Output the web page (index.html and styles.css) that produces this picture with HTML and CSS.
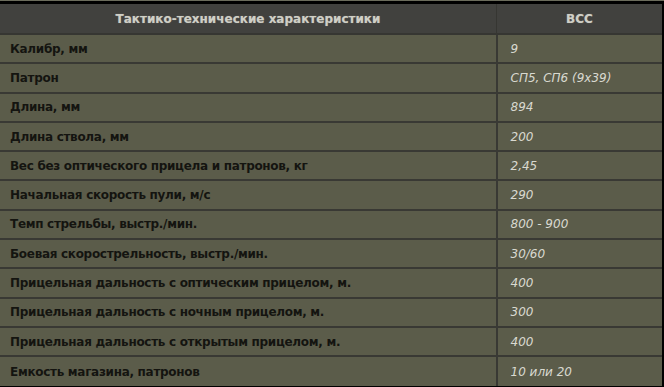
FILE: index.html
```html
<!DOCTYPE html>
<html lang="ru">
<head>
<meta charset="utf-8">
<link rel="stylesheet" href="styles.css">
</head>
<body>
<div class="frame">
<table class="specs">
<thead>
<tr><th class="c1">Тактико-технические характеристики</th><th class="c2">ВСС</th></tr>
</thead>
<tbody>
<tr><td class="c1">Калибр, мм</td><td class="c2">9</td></tr>
<tr><td class="c1">Патрон</td><td class="c2">СП5, СП6 (9x39)</td></tr>
<tr><td class="c1">Длина, мм</td><td class="c2">894</td></tr>
<tr><td class="c1">Длина ствола, мм</td><td class="c2">200</td></tr>
<tr><td class="c1">Вес без оптического прицела и патронов, кг</td><td class="c2">2,45</td></tr>
<tr><td class="c1">Начальная скорость пули, м/с</td><td class="c2">290</td></tr>
<tr><td class="c1">Темп стрельбы, выстр./мин.</td><td class="c2">800 - 900</td></tr>
<tr><td class="c1">Боевая скорострельность, выстр./мин.</td><td class="c2">30/60</td></tr>
<tr><td class="c1">Прицельная дальность с оптическим прицелом, м.</td><td class="c2">400</td></tr>
<tr><td class="c1">Прицельная дальность с ночным прицелом, м.</td><td class="c2">300</td></tr>
<tr><td class="c1">Прицельная дальность с открытым прицелом, м.</td><td class="c2">400</td></tr>
<tr><td class="c1">Емкость магазина, патронов</td><td class="c2">10 или 20</td></tr>
</tbody>
</table>
</div>
</body>
</html>
```

FILE: styles.css
```css
html, body {
  margin: 0;
  padding: 0;
  background: #000;
}
.frame {
  width: 664px;
  height: 387px;
  background: #000;
  border-top: 1px solid #6b6c5c;
  box-sizing: border-box;
  padding-top: 3px;
  overflow: hidden;
}
.specs {
  width: 662px;
  border-collapse: collapse;
  table-layout: fixed;
  font-family: "DejaVu Sans", Verdana, sans-serif;
  font-size: 12px;
  background: #5b5c4a;
}
.specs .c1 { width: 496px; }
.specs th {
  background: #41413e;
  color: #cfcfc6;
  font-weight: bold;
  height: 29px;
  padding: 0;
  text-align: center;
  border-bottom: 2px solid #363632;
  text-shadow: 0 0 1px #8a8a80;
}
.specs th.c1 { border-right: 1px solid #363632; }
.specs td {
  height: 27.3px;
  padding: 0 10px;
  border-bottom: 2px solid #393934;
  vertical-align: middle;
}
.specs td.c1 {
  color: #141410;
  font-weight: bold;
  letter-spacing: -0.3px;
  border-right: 2px solid #393934;
}
.specs td.c2 {
  color: #d9d9d0;
  font-style: italic;
  padding-left: 13px;
}
.specs tbody tr:last-child td { border-bottom: none; height: 29px; }
```
